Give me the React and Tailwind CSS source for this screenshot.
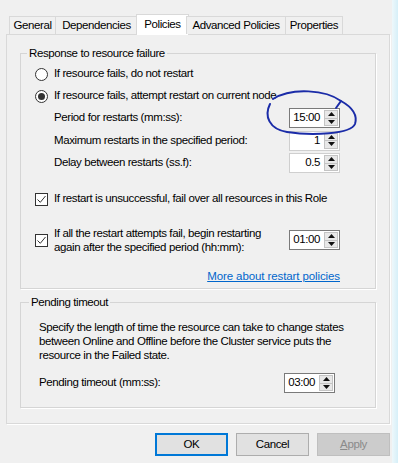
import React from 'react';

const tabs = [
  { label: 'General', w: 'w-[47px]' },
  { label: 'Dependencies', w: 'w-[83px]' },
  { label: 'Policies', w: 'w-[53px]', active: true },
  { label: 'Advanced Policies', w: 'w-[100px]' },
  { label: 'Properties', w: 'w-[58px]' },
];

function Arrow({ down }) {
  return (
    <svg width="7" height="4" viewBox="0 0 7 4">
      <path d={down ? 'M0 0 L7 0 L3.5 4 Z' : 'M0 4 L3.5 0 L7 4 Z'} fill="#111" />
    </svg>
  );
}

function Spinner({ value, dark }) {
  return (
    <div className={`flex h-[20px] w-[51px] border bg-white ${dark ? 'border-[#7a7a7a]' : 'border-[#cfcfcf]'}`}>
      <div className="flex flex-1 items-center justify-end pr-[4px] leading-none">{value}</div>
      <div className="my-[1px] mr-[1px] flex w-[14px] flex-col">
        <div className="flex flex-1 items-center justify-center border border-[#c4c4c4] bg-[#e8e8e8]">
          <Arrow />
        </div>
        <div className="flex flex-1 items-center justify-center border border-t-0 border-[#c4c4c4] bg-[#e8e8e8]">
          <Arrow down />
        </div>
      </div>
    </div>
  );
}

function Radio({ checked }) {
  return (
    <span className="flex h-[13px] w-[13px] shrink-0 items-center justify-center rounded-full border border-[#333] bg-white">
      {checked && <span className="h-[7px] w-[7px] rounded-full bg-[#333]" />}
    </span>
  );
}

function Check() {
  return (
    <span className="flex h-[13px] w-[13px] shrink-0 items-center justify-center border border-[#333] bg-white">
      <svg width="11" height="11" viewBox="0 0 11 11">
        <path d="M1.5 5.5 L4.3 8.3 L9.5 2" fill="none" stroke="#333" strokeWidth="1" />
      </svg>
    </span>
  );
}

function Button({ children, primary, disabled }) {
  return (
    <button
      className={`flex h-[23px] w-[73px] items-center justify-center ${
        primary
          ? 'border-2 border-[#0078d7] bg-[#e1e1e1]'
          : disabled
          ? 'border border-[#bfbfbf] bg-[#cccccc] text-[#8a8a8a]'
          : 'border border-[#adadad] bg-[#e1e1e1]'
      }`}
    >
      {children}
    </button>
  );
}

export default function App() {
  return (
    <div className="relative flex h-[463px] w-[398px] overflow-hidden bg-[#f0f0f0] font-['Liberation_Sans',Arial,sans-serif] text-[11.5px] tracking-[-0.4px] text-black">
      <div className="w-[392px] pt-[15px]">
        {/* Tabs */}
        <div className="relative z-10 ml-[9px] flex h-[19px] items-end">
          {tabs.map((t, i) =>
            t.active ? (
              <div
                key={t.label}
                className={`-mx-[2px] -mb-[1px] flex h-[21px] items-center justify-center border border-b-0 border-[#d9d9d9] bg-white ${t.w}`}
              >
                {t.label}
              </div>
            ) : (
              <div
                key={t.label}
                className={`${i === 0 ? '' : '-ml-[1px]'} flex h-[18px] items-center justify-center border border-b-0 border-[#d9d9d9] bg-[#f0f0f0] ${t.w}`}
              >
                {t.label}
              </div>
            )
          )}
        </div>

        {/* Panel */}
        <div className="ml-[6px] w-[384px] border border-[#d9d9d9] bg-[#f0f0f0] pt-[11px] pb-[15px] shadow-[1px_1px_0_#fff]">
          <fieldset className="mx-[13px] border border-[#d5d5d5] pb-[2px] shadow-[1px_1px_0_#fff]">
            <legend className="ml-[6px] bg-[#f0f0f0] px-[2px] leading-[14px]">Response to resource failure</legend>
            <div className="mt-[3px] flex h-[22px] items-center gap-[6px] pl-[14px]">
              <Radio />
              <span>If resource fails, do not restart</span>
            </div>
            <div className="flex h-[22px] items-center gap-[6px] pl-[14px]">
              <Radio checked />
              <span>If resource fails, attempt restart on current node</span>
            </div>
            <div className="flex h-[22px] items-center justify-between pl-[33px] pr-[35px]">
              <span>Period for restarts (mm:ss):</span>
              <Spinner value="15:00" dark />
            </div>
            <div className="flex h-[23px] items-center justify-between pl-[33px] pr-[35px]">
              <span>Maximum restarts in the specified period:</span>
              <Spinner value="1" />
            </div>
            <div className="flex h-[22px] items-center justify-between pl-[33px] pr-[35px]">
              <span>Delay between restarts (ss.f):</span>
              <Spinner value="0.5" />
            </div>
            <div className="mt-[14px] flex h-[22px] items-center gap-[6px] pl-[14px]">
              <Check />
              <span>If restart is unsuccessful, fail over all resources in this Role</span>
            </div>
            <div className="mt-[14px] flex h-[32px] items-center pl-[14px] pr-[35px]">
              <Check />
              <span className="ml-[6px] flex-1 leading-[14px]">
                If all the restart attempts fail, begin restarting
                <br />
                again after the specified period (hh:mm):
              </span>
              <Spinner value="01:00" dark />
            </div>
            <div className="mt-[12px] flex h-[18px] items-center justify-end pr-[35px]">
              <a href="#" className="tracking-[-0.1px] text-[#0066cc] underline">
                More about restart policies
              </a>
            </div>
          </fieldset>

          <fieldset className="mx-[13px] mt-[6px] border border-[#d5d5d5] pb-[14px] shadow-[1px_1px_0_#fff]">
            <legend className="ml-[8px] bg-[#f0f0f0] px-[2px] leading-[14px]">Pending timeout</legend>
            <p className="mt-[11px] pl-[18px] leading-[14px]">
              Specify the length of time the resource can take to change states
              <br />
              between Online and Offline before the Cluster service puts the
              <br />
              resource in the Failed state.
            </p>
            <div className="mt-[11px] flex h-[20px] items-center justify-between pl-[18px] pr-[40px]">
              <span>Pending timeout (mm:ss):</span>
              <Spinner value="03:00" dark />
            </div>
          </fieldset>
        </div>

        {/* Buttons */}
        <div className="mt-[9px] flex justify-end gap-[8px] pr-[2px]">
          <Button primary>OK</Button>
          <Button>Cancel</Button>
          <Button disabled>
            <span>
              <span className="underline">A</span>pply
            </span>
          </Button>
        </div>
      </div>

      <div className="w-[6px] bg-gradient-to-r from-[#eef8fb] to-[#d6eff8]" />

      {/* hand-drawn annotation */}
      <svg className="pointer-events-none absolute inset-0" width="398" height="463" viewBox="0 0 398 463">
        <path
          d="M273 99 C292 87 326 90 341 101 C350 106 358 114 355 124 C351 134 312 136 287 132 C269 129 264 116 270 104"
          fill="none"
          stroke="#1b2ca8"
          strokeWidth="2"
          strokeLinecap="round"
        />
        <path d="M336 108 L341 101" fill="none" stroke="#1b2ca8" strokeWidth="2" strokeLinecap="round" />
      </svg>
    </div>
  );
}
